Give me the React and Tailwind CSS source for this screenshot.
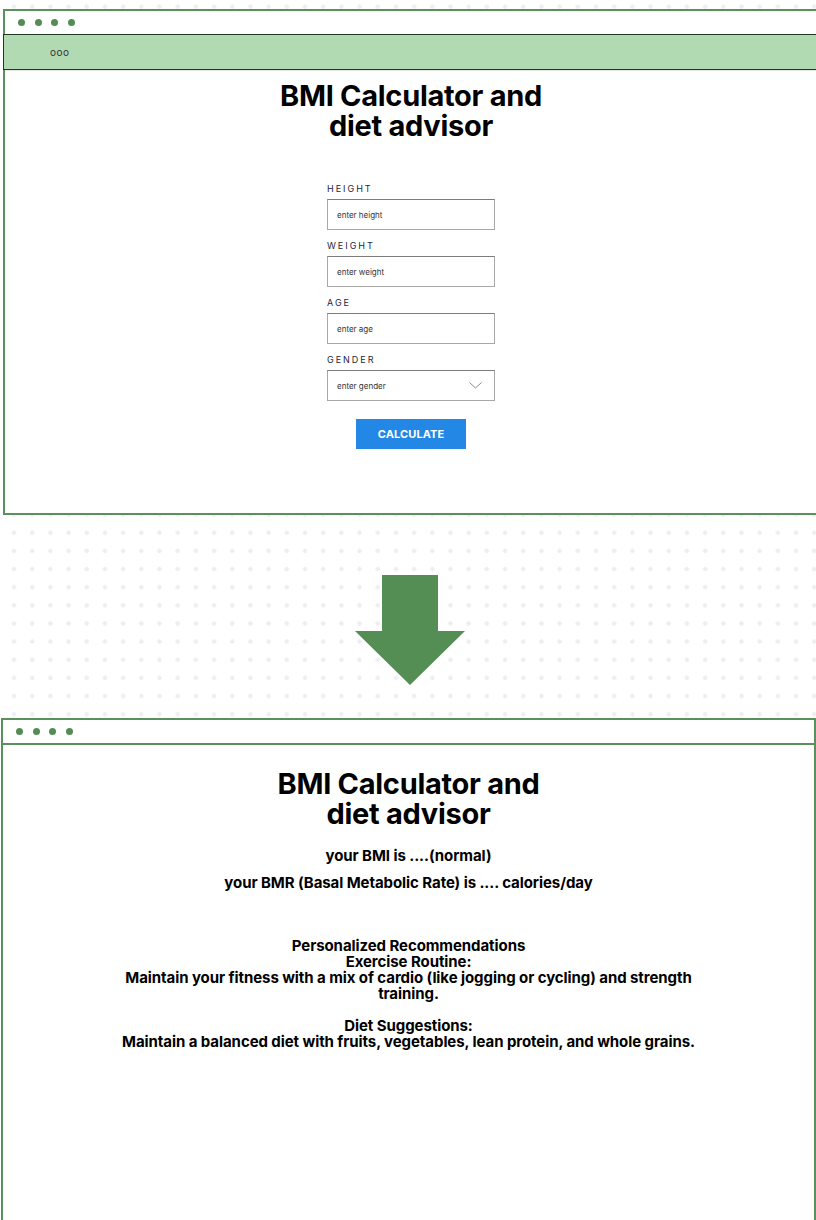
import React from 'react'

const font = { fontFamily: 'Inter, Roboto, "Liberation Sans", sans-serif' }

function WindowDots() {
  return (
    <div className="flex items-center gap-[9.5px] pl-[13px] h-[23px]">
      {[0, 1, 2, 3].map(i => (
        <span key={i} className="w-[7px] h-[7px] rounded-full bg-[#558b55]" />
      ))}
    </div>
  )
}

function Title() {
  return (
    <h1 className="text-center font-bold text-[29px] leading-[30px] tracking-[-0.01em] text-black">
      <span className="block">BMI Calculator and</span>
      <span className="block">diet advisor</span>
    </h1>
  )
}

function Field({ label, placeholder, select }) {
  return (
    <div className="flex flex-col">
      <label className="text-[9px] leading-[10px] tracking-[0.22em] text-[#1c2540] mb-[5px]">{label}</label>
      <div className="h-[31px] border border-[#a8a8a8] border-t-[#7d7d7d] flex items-center justify-between pl-[9px] pr-[12px]">
        <span className="text-[8px] text-[#333]">{placeholder}</span>
        {select && (
          <svg width="13" height="7" viewBox="0 0 13 7" fill="none">
            <path d="M0.5 0.5 L6.5 6 L12.5 0.5" stroke="#8a8a8a" strokeWidth="1" />
          </svg>
        )}
      </div>
    </div>
  )
}

export default function App() {
  return (
    <div
      className="min-h-[1220px] overflow-hidden bg-white bg-[radial-gradient(circle,#eceef2_1.9px,transparent_2.4px)] bg-[length:18.2px_18.15px] bg-[position:4.9px_-2.4px] pt-[9px]"
      style={font}
    >
      {/* form window */}
      <div className="ml-[3px] w-[830px] h-[506px] border-2 border-[#5b8f5b] bg-white">
        <WindowDots />
        <div className="h-[36px] -ml-[2px] bg-[#b1dab3] border border-[#1e3a1e] flex items-center pl-[46px]">
          <span className="text-[10px] leading-none tracking-[0.5px] text-[#333]">ooo</span>
        </div>
        <div className="w-[812px] border-t border-[#e6e6e6] pt-[10px]">
          <Title />
          <div className="w-[168px] mx-auto mt-[43px] flex flex-col gap-[11px]">
            <Field label="HEIGHT" placeholder="enter height" />
            <Field label="WEIGHT" placeholder="enter weight" />
            <Field label="AGE" placeholder="enter age" />
            <Field label="GENDER" placeholder="enter gender" select />
          </div>
          <div className="flex justify-center mt-[18px]">
            <button className="w-[110px] h-[30px] bg-[#2388e5] text-white text-[11px] font-bold tracking-[0.01em]">CALCULATE</button>
          </div>
        </div>
      </div>

      {/* arrow */}
      <div className="flex justify-center h-[203px] pt-[60px] pl-[3px]">
        <svg width="110" height="110" viewBox="0 0 110 110">
          <polygon points="27,0 83,0 83,56 110,56 55,110 0,56 27,56" fill="#558e55" />
        </svg>
      </div>

      {/* result window */}
      <div className="ml-[1px] w-[815px] h-[520px] border-2 border-b-0 border-[#5b8f5b] bg-white">
        <WindowDots />
        <div className="border-t-2 border-[#5b8f5b] pt-[24px]">
          <Title />
          <div className="text-center font-bold text-[15px] tracking-[-0.005em] text-black mt-[18px]">
            <p className="leading-[18px]">your BMI is ....(normal)</p>
            <p className="leading-[18px] mt-[9px]">your BMR (Basal Metabolic Rate) is .... calories/day</p>
            <p className="w-[600px] mx-auto leading-[16px] mt-[46px]">
              Personalized Recommendations
              <br />
              Exercise Routine:
              <br />
              Maintain your fitness with a mix of cardio (like jogging or cycling) and strength training.
              <br />
              <br />
              Diet Suggestions:
              <br />
              Maintain a balanced diet with fruits, vegetables, lean protein, and whole grains.
            </p>
          </div>
        </div>
      </div>
    </div>
  )
}
